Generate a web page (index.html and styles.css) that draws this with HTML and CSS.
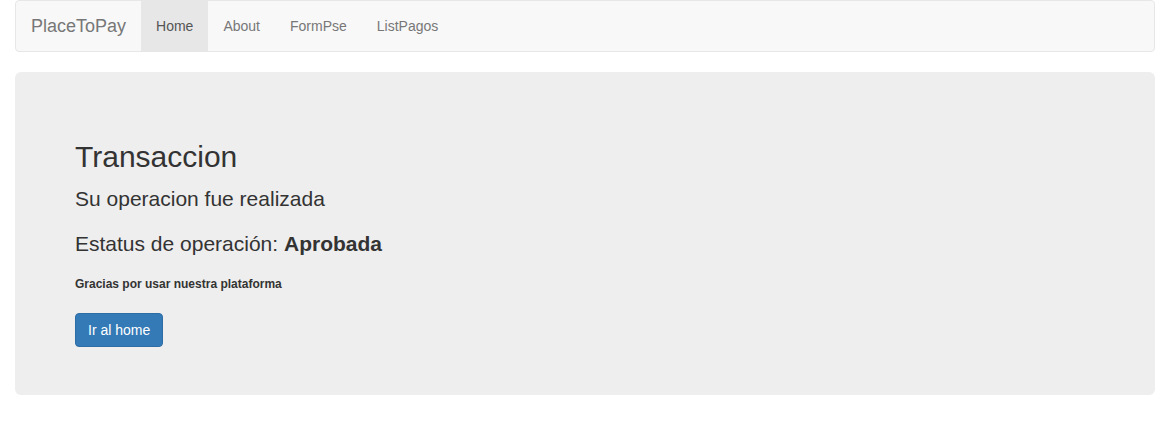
FILE: index.html
```html
<!DOCTYPE html>
<html lang="es">
<head>
<meta charset="utf-8">
<title>PlaceToPay</title>
<link rel="stylesheet" href="styles.css">
</head>
<body>
<div class="page">
  <nav class="navbar">
    <a class="brand" href="#">PlaceToPay</a>
    <ul class="nav">
      <li class="active"><a href="#">Home</a></li>
      <li><a href="#">About</a></li>
      <li><a href="#">FormPse</a></li>
      <li><a href="#">ListPagos</a></li>
    </ul>
  </nav>
  <div class="jumbotron">
    <h2 class="title">Transaccion</h2>
    <p class="lead">Su operacion fue realizada</p>
    <p class="lead">Estatus de operación: <strong>Aprobada</strong></p>
    <div class="thanks">Gracias por usar nuestra plataforma</div>
    <a class="btn" href="#">Ir al home</a>
  </div>
</div>
</body>
</html>
```
FILE: styles.css
```css
* { box-sizing: border-box; }
html, body { margin: 0; padding: 0; background: #fff; }
body {
  font-family: "Liberation Sans", Arial, Helvetica, sans-serif;
  font-size: 14px;
  line-height: 20px;
  color: #333;
}
.page { padding: 0 15px; }
.navbar {
  display: flex;
  align-items: stretch;
  height: 52px;
  background: #f8f8f8;
  border: 1px solid #e7e7e7;
  border-radius: 4px;
  margin-bottom: 20px;
}
.brand {
  display: block;
  padding: 15px;
  font-size: 18px;
  line-height: 20px;
  color: #777;
  text-decoration: none;
}
.nav { display: flex; list-style: none; margin: 0; padding: 0; }
.nav li a {
  display: block;
  padding: 15px;
  line-height: 20px;
  color: #777;
  text-decoration: none;
}
.nav li.active a { background: #e7e7e7; color: #555; }
.jumbotron {
  background: #eee;
  border-radius: 6px;
  padding: 48px 60px;
}
.title {
  font-size: 30px;
  line-height: 33px;
  font-weight: 500;
  margin: 20px 0 11px;
}
.lead {
  font-size: 21px;
  line-height: 30px;
  font-weight: 400;
  margin: 0 0 15px;
}
.lead strong { font-weight: 700; }
.thanks {
  font-size: 12px;
  line-height: 13px;
  font-weight: 700;
  margin-top: 19px;
  margin-bottom: 22px;
}
.btn {
  display: inline-block;
  padding: 6px 12px;
  font-size: 14px;
  line-height: 20px;
  color: #fff;
  background: #337ab7;
  border: 1px solid #2e6da4;
  border-radius: 4px;
  text-decoration: none;
  vertical-align: top;
}
```
